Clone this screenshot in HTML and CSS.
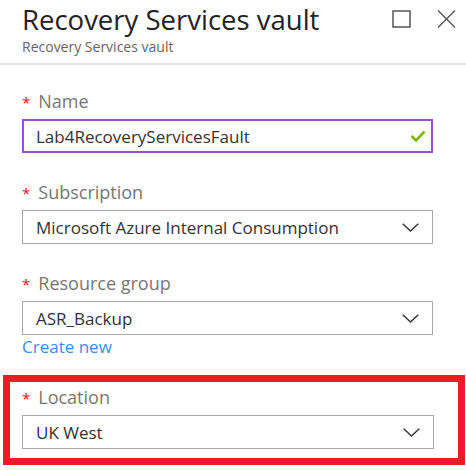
FILE: index.html
```html
<!DOCTYPE html>
<html>
<head>
<meta charset="utf-8">
<link rel="stylesheet" href="styles.css">
</head>
<body>
<div class="blade">
  <header class="head">
    <div class="head-text">
      <h1 class="title">Recovery Services vault</h1>
      <div class="subtitle">Recovery Services vault</div>
    </div>
    <div class="head-icons">
      <svg class="ico-max" width="19" height="18" viewBox="0 0 19 18"><rect x="1" y="1" width="17" height="16" fill="none" stroke="#555" stroke-width="1.5"/></svg>
      <svg class="ico-close" width="19" height="18" viewBox="0 0 19 18"><path d="M1 0.5 L18 17.5 M18 0.5 L1 17.5" stroke="#555" stroke-width="1.4" fill="none"/></svg>
    </div>
  </header>
  <div class="form">
    <div class="field">
      <label class="label"><span class="req">*</span>Name</label>
      <div class="box box-active">
        <span class="val">Lab4RecoveryServicesFault</span>
        <svg class="check" width="16" height="12" viewBox="0 0 16 12"><path d="M1.5 6 L6 10.5 L14.5 1.5" stroke="#7fba00" stroke-width="2.6" fill="none"/></svg>
      </div>
    </div>
    <div class="field">
      <label class="label"><span class="req">*</span>Subscription</label>
      <div class="box">
        <span class="val">Microsoft Azure Internal Consumption</span>
        <svg class="chev" width="17" height="9" viewBox="0 0 17 9"><path d="M0.7 0.7 L8.5 8 L16.3 0.7" stroke="#333" stroke-width="1.4" fill="none"/></svg>
      </div>
    </div>
    <div class="field">
      <label class="label"><span class="req">*</span>Resource group</label>
      <div class="box">
        <span class="val">ASR_Backup</span>
        <svg class="chev" width="17" height="9" viewBox="0 0 17 9"><path d="M0.7 0.7 L8.5 8 L16.3 0.7" stroke="#333" stroke-width="1.4" fill="none"/></svg>
      </div>
      <a class="link">Create new</a>
    </div>
  </div>
  <div class="highlight">
    <div class="field">
      <label class="label"><span class="req">*</span>Location</label>
      <div class="box">
        <span class="val">UK West</span>
        <svg class="chev" width="17" height="9" viewBox="0 0 17 9"><path d="M0.7 0.7 L8.5 8 L16.3 0.7" stroke="#333" stroke-width="1.4" fill="none"/></svg>
      </div>
    </div>
  </div>
</div>
</body>
</html>
```
FILE: styles.css
```css
html, body {
  margin: 0;
  padding: 0;
  background: #fff;
}
body {
  width: 466px;
  height: 470px;
  overflow: hidden;
  font-family: "Open Sans", "Noto Sans", sans-serif;
  color: #333;
}
.blade {
  display: flex;
  flex-direction: column;
}
.head {
  display: flex;
  justify-content: space-between;
  align-items: flex-start;
  padding: 0 10px 0 22px;
  height: 63px;
  border-bottom: 2px solid #e3e3e3;
}
.title {
  margin: 0;
  font-weight: 400;
  font-size: 27.5px;
  line-height: 34px;
  padding-top: 3px;
  color: #222;
}
.subtitle {
  font-size: 14px;
  line-height: 18px;
  color: #666;
  margin-top: 1px;
}
.head-icons {
  display: flex;
  gap: 26px;
  padding-top: 10px;
}
.form {
  display: flex;
  flex-direction: column;
  padding: 24px 33px 0 22px;
  gap: 27px;
}
.field {
  display: flex;
  flex-direction: column;
}
.label {
  display: flex;
  align-items: baseline;
  font-size: 18px;
  line-height: 24px;
  color: #777;
  margin-bottom: 5px;
}
.req {
  color: #e81123;
  font-size: 15px;
  margin-right: 8px;
}
.box {
  display: flex;
  align-items: center;
  justify-content: space-between;
  height: 34px;
  box-sizing: border-box;
  border: 1px solid #a9a9a9;
  padding: 0 13px 0 13px;
}
.box-active {
  border: 2px solid #9c4fc9;
  padding: 0 5px 0 12px;
}
.val {
  font-size: 17px;
  color: #333;
}
.link {
  font-size: 17px;
  line-height: 22px;
  color: #3b8ee6;
  margin-top: 1px;
}
.highlight {
  margin: 17px 1px 0 3px;
  border: 7px solid #ed1c24;
  padding: 3px 24px 9px 12px;
}
```
